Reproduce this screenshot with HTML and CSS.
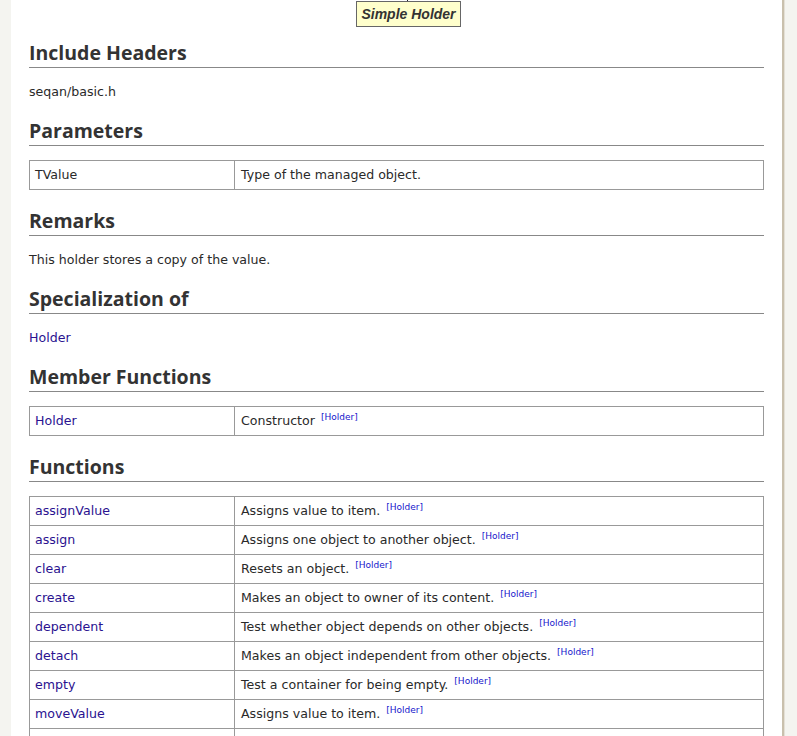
FILE: index.html
```html
<!DOCTYPE html>
<html>
<head>
<meta charset="utf-8">
<link rel="stylesheet" href="styles.css">
</head>
<body>
<div class="panel">
  <div class="tip-line"></div>
  <div class="tooltip">Simple Holder</div>

  <h2>Include Headers</h2>
  <p>seqan/basic.h</p>

  <h2>Parameters</h2>
  <table>
    <tr><td class="c1">TValue</td><td>Type of the managed object.</td></tr>
  </table>

  <h2>Remarks</h2>
  <p>This holder stores a copy of the value.</p>

  <h2>Specialization of</h2>
  <p><a href="#">Holder</a></p>

  <h2>Member Functions</h2>
  <table>
    <tr><td class="c1"><a href="#">Holder</a></td><td>Constructor <sup><a href="#">[Holder]</a></sup></td></tr>
  </table>

  <h2>Functions</h2>
  <table>
    <tr><td class="c1"><a href="#">assignValue</a></td><td>Assigns value to item. <sup><a href="#">[Holder]</a></sup></td></tr>
    <tr><td class="c1"><a href="#">assign</a></td><td>Assigns one object to another object. <sup><a href="#">[Holder]</a></sup></td></tr>
    <tr><td class="c1"><a href="#">clear</a></td><td>Resets an object. <sup><a href="#">[Holder]</a></sup></td></tr>
    <tr><td class="c1"><a href="#">create</a></td><td>Makes an object to owner of its content. <sup><a href="#">[Holder]</a></sup></td></tr>
    <tr><td class="c1"><a href="#">dependent</a></td><td>Test whether object depends on other objects. <sup><a href="#">[Holder]</a></sup></td></tr>
    <tr><td class="c1"><a href="#">detach</a></td><td>Makes an object independent from other objects. <sup><a href="#">[Holder]</a></sup></td></tr>
    <tr><td class="c1"><a href="#">empty</a></td><td>Test a container for being empty. <sup><a href="#">[Holder]</a></sup></td></tr>
    <tr><td class="c1"><a href="#">moveValue</a></td><td>Assigns value to item. <sup><a href="#">[Holder]</a></sup></td></tr>
    <tr><td class="c1"></td><td></td></tr>
  </table>
</div>
</body>
</html>
```

FILE: styles.css
```css
html, body {
  margin: 0;
  padding: 0;
  background: #f4f4f0;
}
body {
  font-family: "DejaVu Sans", "Liberation Sans", sans-serif;
  font-size: 12.6px;
  color: #2a2a2a;
}
.panel {
  position: relative;
  margin-left: 11px;
  width: 735px;
  padding: 22px 18px 40px 18px;
  background: #fff;
  border-right: 2px solid #c9c0ad;
  box-shadow: 1px 0 0 #e4e0d6;
}
.tip-line {
  position: absolute;
  left: 396px;
  top: 0;
  width: 1px;
  height: 2px;
  background: #222;
}
.tooltip {
  position: absolute;
  left: 345px;
  top: 1px;
  width: 103px;
  height: 24px;
  border: 1px solid #666;
  background: #ffffcc;
  font-family: "Liberation Sans", Arial, sans-serif;
  font-weight: bold;
  font-style: italic;
  font-size: 14px;
  line-height: 24px;
  text-align: center;
  color: #333;
}
h2 {
  margin: 19px 0 0 0;
  padding-bottom: 2px;
  font-family: "Open Sans", "DejaVu Sans", sans-serif;
  font-size: 19.5px;
  line-height: 24px;
  font-weight: bold;
  color: #333;
  border-bottom: 1px solid #888;
}
p {
  margin: 15px 0 0 0;
  line-height: 17px;
}
a {
  color: #2a1290;
  text-decoration: none;
}
table {
  margin-top: 14px;
  width: 100%;
  border-collapse: collapse;
}
td {
  border: 1px solid #999;
  padding: 5px 6px 5px 6px;
  line-height: 18px;
  height: 18px;
  vertical-align: top;
}
td.c1 {
  width: 193px;
  padding-left: 5px;
}
sup {
  font-size: 9px;
  line-height: 0;
  vertical-align: 5px;
  margin-left: 2px;
}
sup a {
  color: #1515cc;
}
```
